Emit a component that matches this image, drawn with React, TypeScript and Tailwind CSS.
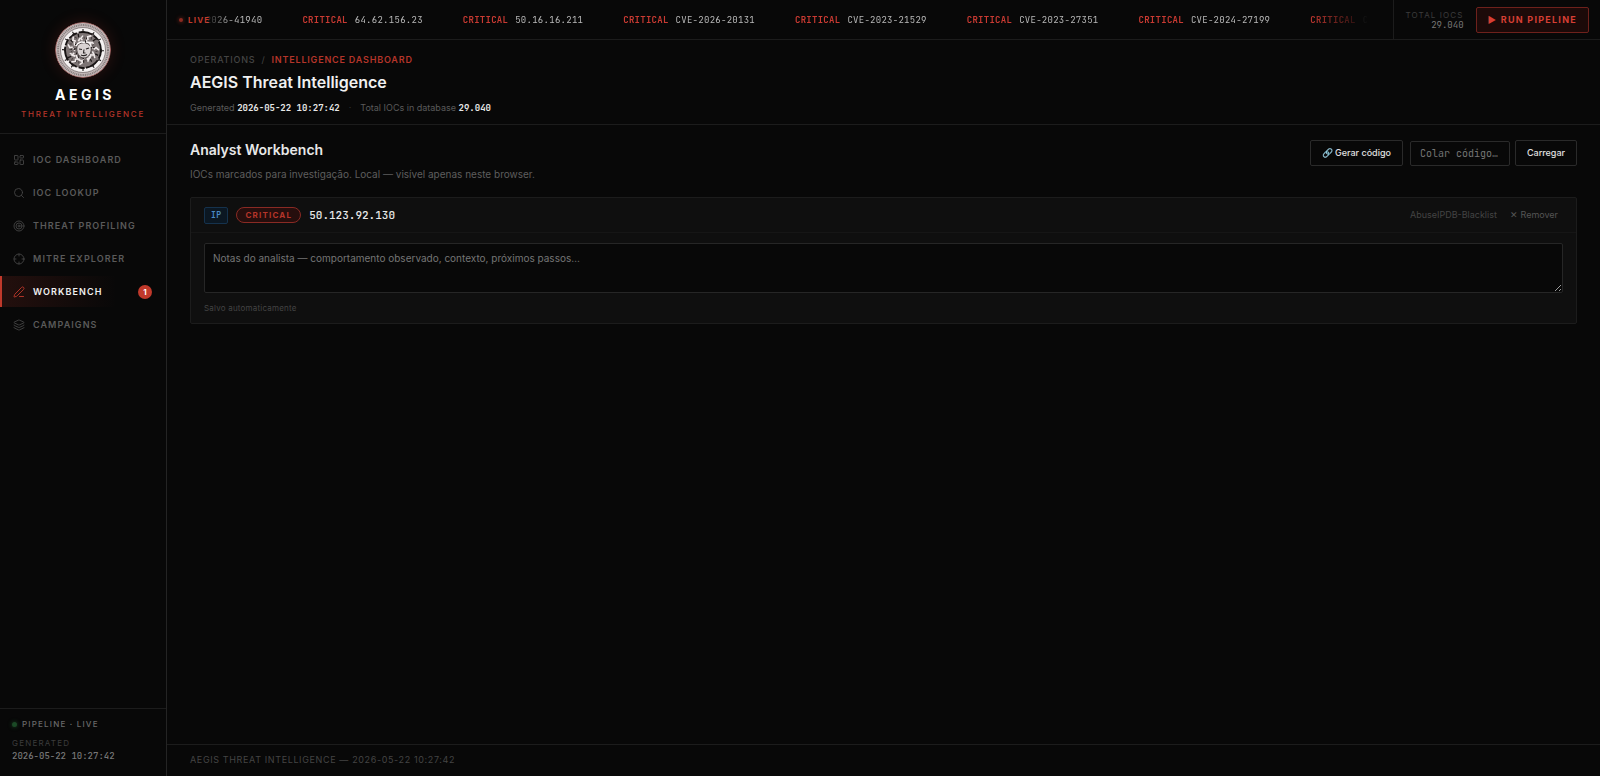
import { useState } from "react";
import { Crosshair, Layers, LayoutDashboard, PenLine, Search, Target } from "lucide-react";
import clsx from "clsx";

const navItems = [
  { id: "dashboard", label: "IOC Dashboard", icon: LayoutDashboard },
  { id: "lookup", label: "IOC Lookup", icon: Search },
  { id: "profiling", label: "Threat Profiling", icon: Target },
  { id: "mitre", label: "MITRE Explorer", icon: Crosshair },
  { id: "workbench", label: "Workbench", icon: PenLine, count: 1 },
  { id: "campaigns", label: "Campaigns", icon: Layers },
];

const tickerItems = [
  "64.62.156.23",
  "50.16.16.211",
  "CVE-2026-20131",
  "CVE-2023-21529",
  "CVE-2023-27351",
  "CVE-2024-27199",
  "CVE-2024-21182",
];

const mono = "font-['JetBrains_Mono','DejaVu_Sans_Mono',monospace]";

function ShieldLogo() {
  const studs = [0, 32, 58, 92, 121, 148, 180, 214, 240, 271, 302, 330];
  const curls = [
    [8, 0.95],
    [38, 1.1],
    [66, 0.85],
    [98, 1.05],
    [132, 0.95],
    [166, 0.85],
    [201, 1],
    [232, 1.1],
    [264, 0.9],
    [298, 1.05],
    [332, 1.1],
  ];
  return (
    <svg viewBox="0 0 56 56" className="size-14 rounded-full shadow-[0_0_16px_rgba(192,57,43,0.2)]" aria-hidden="true">
      <circle cx="28" cy="28" r="27.5" fill="#c3b9b9" stroke="#9a5a58" />
      <circle cx="28" cy="28" r="25" fill="none" stroke="#857b7b" strokeWidth="2" strokeDasharray="1 0.8" />
      <circle cx="28" cy="28" r="22.5" fill="#f5f1f1" stroke="#6a6161" strokeWidth="0.7" />
      <circle cx="28" cy="28" r="18" fill="#7d7474" stroke="#171313" strokeWidth="1.8" strokeDasharray="9 2 14 1.5 6 2" />
      {studs.map((a) => (
        <path key={a} d="M28 7v3M26.5 9.500h3" stroke="#1f1a1a" strokeWidth="1.1" transform={`rotate(${a} 28 28)`} />
      ))}
      {curls.map(([a, k]) => (
        <g key={a} fill="none" transform={`rotate(${a} 28 28) translate(28 28) scale(${k}) translate(-28 -28)`}>
          <path d="M26 18l-2-2 2-3M28 19l3-2" stroke="#efe9e9" strokeWidth="1.5" />
          <path d="M30 16l1-3M24 20l2 1" stroke="#1b1616" strokeWidth="1.2" />
          <path d="M27 14l1 2M26 21l1 1" stroke="#463e3e" strokeWidth="0.9" />
        </g>
      ))}
      <path d="M22 25c1-5 11-6 14 0 1 5-2 11-7 11s-8-6-7-11z" fill="#d9d2d2" stroke="#3b3434" strokeWidth="0.8" />
      <path d="M24 27l3 .5M31 27l3-1M29 27.5l-.5 3.5h2M26 33c2 1 4 .8 6-.5" fill="none" stroke="#2a2525" strokeWidth="1.1" />
      <path d="M21 24c2-4 6-5 9-3M31 20c3 0 5 2 5 5" fill="none" stroke="#faf7f7" strokeWidth="1.4" />
      <path d="M21 33c1 4 3 6 7 6M36 32c0 3-2 5-4 6" fill="none" stroke="#ece6e6" strokeWidth="1.6" />
    </svg>
  );
}

function Sidebar() {
  const [active, setActive] = useState("workbench");

  return (
    <aside className="flex w-[167px] shrink-0 flex-col border-r border-[#242424] bg-[#080808]">
      <div className="flex flex-col items-center border-b border-[#1c1c1c] pt-[22px] pb-3">
        <ShieldLogo />
        <div className="mt-2 pl-1 text-[14px] leading-[18px] font-bold tracking-[0.25em] text-white">AEGIS</div>
        <div className="mt-[3px] text-[8px] leading-[14px] font-medium tracking-[0.22em] text-[#b5352a] uppercase">
          Threat Intelligence
        </div>
      </div>

      <nav className="flex flex-1 flex-col gap-0.5 pt-2.5">
        {navItems.map(({ id, label, icon: Icon, count }) => (
          <button
            key={id}
            type="button"
            onClick={() => setActive(id)}
            className={clsx(
              "flex h-[31px] items-center gap-2 border-l-2 pr-3.5 pl-[11px] text-left text-[9px] font-semibold tracking-[0.12em] uppercase",
              active === id
                ? "border-[#c0392b] bg-linear-to-r from-[#c0392b26] to-[#c0392b00] to-70% text-[#f0f0f0]"
                : "border-transparent text-[#5a5a5a]",
            )}
          >
            <Icon size={12} strokeWidth={1.8} className={active === id ? "text-[#c0392b]" : "text-[#444444]"} />
            {label}
            {count && (
              <span className="ml-auto flex size-3.5 items-center justify-center rounded-full bg-[#c0392b] text-[8px] font-bold tracking-normal text-white">
                {count}
              </span>
            )}
          </button>
        ))}
      </nav>

      <div className="border-t border-[#1c1c1c] px-3 pt-[9px] pb-3.5">
        <div className="flex items-center gap-[5px] text-[8px] leading-[12px] font-medium tracking-[0.15em] text-[#6a6a6a] uppercase">
          <span className="size-[5px] rounded-full bg-[#1b4a26] shadow-[0_0_4px_#1b4a26]" />
          Pipeline · Live
        </div>
        <div className="mt-[7px] text-[8px] leading-[12px] tracking-[0.15em] text-[#3c3c3c] uppercase">Generated</div>
        <div className={clsx(mono, "mt-px text-[9px] leading-[12px] font-medium text-[#777777]")}>2026-05-22 10:27:42</div>
      </div>
    </aside>
  );
}

function TopBar() {
  return (
    <div className="flex h-10 items-stretch border-b border-[#1c1c1c]">
      <div className="flex w-9 shrink-0 items-center gap-[5px] pl-3">
        <span className="size-1 shrink-0 rounded-full bg-[#8a2a20] shadow-[0_0_4px_#8a2a20]" />
        <span className="text-[8px] font-bold tracking-[0.15em] text-[#c0392b]">LIVE</span>
      </div>
      <div className="flex min-w-0 flex-1 items-center overflow-hidden pt-0.5 mask-[linear-gradient(to_right,transparent,black_30px,black_calc(100%-64px),transparent)]">
        <div className={clsx(mono, "-ml-5 flex shrink-0 gap-10 text-[9px] tracking-[0.03em] whitespace-nowrap text-[#b8b8b8]")}>
          <span>CVE-2026-41940</span>
          {tickerItems.map((ioc) => (
            <span key={ioc} className="flex gap-[7px]">
              <span className="font-bold text-[#c93a32]">CRITICAL</span>
              {ioc}
            </span>
          ))}
        </div>
      </div>
      <div className="ml-6 flex shrink-0 items-center gap-3 border-l border-[#1c1c1c] pr-[11px] pl-3">
        <div className="text-right leading-[10px]">
          <div className="text-[8px] tracking-[0.14em] text-[#3c3c3c]">TOTAL IOCS</div>
          <div className={clsx(mono, "text-[9px] text-[#777777]")}>29.040</div>
        </div>
        <button
          type="button"
          className="h-[26px] rounded-xs border border-[#6e211c] bg-[#1c0a09] px-[11px] text-[9px] font-bold tracking-[0.14em] whitespace-nowrap text-[#d63f34]"
        >
          ▶ RUN PIPELINE
        </button>
      </div>
    </div>
  );
}

function PageHeader() {
  return (
    <header className="border-b border-[#1c1c1c] px-[23px] pt-[13px] pb-[9px]">
      <div className="flex gap-1.5 text-[9px] leading-[14px] tracking-[0.09em] text-[#444444] uppercase">
        <span className="font-medium">Operations</span>
        <span>/</span>
        <span className="font-semibold text-[#b5352a]">Intelligence Dashboard</span>
      </div>
      <h1 className="mt-[3px] text-[16px] leading-[24px] font-semibold text-[#f0f0f0]">AEGIS Threat Intelligence</h1>
      <div className="mt-[7px] flex items-center text-[9px] leading-[14px] text-[#5a5a5a]">
        <span>
          Generated <strong className={clsx(mono, "font-bold text-[#e8e8e8]")}>2026-05-22 10:27:42</strong>
        </span>
        <span className="mx-[9px] text-[#333333]">·</span>
        <span>
          Total IOCs in database <strong className={clsx(mono, "font-bold text-[#e8e8e8]")}>29.040</strong>
        </span>
      </div>
    </header>
  );
}

function IocCard() {
  const [notes, setNotes] = useState("");

  return (
    <article className="rounded-xs border border-[#1c1c1c] bg-[#0f0f0f]">
      <div className="flex h-[35px] items-center border-b border-[#161616] px-[13px]">
        <span className={clsx(mono, "flex h-[17px] items-center rounded-xs border border-[#15324d] bg-[#0b1722] px-1.5 text-[8px] font-bold tracking-wider text-[#4a8ac4]")}>
          IP
        </span>
        <span className="ml-2 flex h-4 items-center rounded-full border border-[#8a2a24] bg-[#260e0d] px-2 text-[8px] font-bold tracking-[0.15em] text-[#b5352a]">
          CRITICAL
        </span>
        <span className={clsx(mono, "ml-2 text-[11px] font-medium text-[#e8e8e8]")}>50.123.92.130</span>
        <span className="ml-auto text-[9px] text-[#444444]">AbuseIPDB-Blacklist</span>
        <button type="button" className="ml-2 px-[5px] text-[9px] text-[#555555]">
          ✕ Remover
        </button>
      </div>
      <div className="px-[13px] pt-2.5 pb-2">
        <textarea
          aria-label="Notas do analista"
          value={notes}
          onChange={(e) => setNotes(e.target.value)}
          placeholder="Notas do analista — comportamento observado, contexto, próximos passos…"
          className="block h-[50px] w-full resize-y rounded-xs border border-[#262626] bg-[#080808] px-2 py-1.5 text-[10px] leading-[16px] text-[#e0e0e0] outline-none placeholder:text-[#757575]"
        />
        <div className="mt-2 text-[8px] leading-[14px] tracking-wide text-[#444444]">Salvo automaticamente</div>
      </div>
    </article>
  );
}

function Workbench() {
  return (
    <main className="flex-1 px-[23px] pt-[15px]">
      <div className="mb-4 flex items-start justify-between">
        <div>
          <h2 className="text-[14px] leading-[20px] font-semibold text-[#e8e8e8]">Analyst Workbench</h2>
          <p className="mt-[7px] text-[10px] leading-[14px] text-[#5e5e5e]">
            IOCs marcados para investigação. Local — visível apenas neste browser.
          </p>
        </div>
        <div className="flex items-end text-[9px] font-medium text-[#e0e0e0]">
          <button type="button" className="h-[26px] rounded-xs border border-[#2a2a2a] px-[11px]">
            🔗 Gerar código
          </button>
          <input
            type="text"
            aria-label="Colar código"
            placeholder="Colar código…"
            className={clsx(mono, "ml-[7px] h-[25px] w-[100px] rounded-xs border border-[#2a2a2a] px-[9px] text-[10px] font-normal outline-none placeholder:text-[#757575]")}
          />
          <button type="button" className="ml-[5px] h-[26px] rounded-xs border border-[#2a2a2a] px-[11px]">
            Carregar
          </button>
        </div>
      </div>
      <IocCard />
    </main>
  );
}

export default function App() {
  return (
    <div className="flex min-h-screen bg-[#080808] font-['Inter',sans-serif]">
      <Sidebar />
      <div className="flex min-w-0 flex-1 flex-col">
        <TopBar />
        <PageHeader />
        <Workbench />
        <footer className="border-t border-[#1c1c1c] px-[23px] pt-2 pb-[9px] text-[9px] leading-[14px] tracking-[0.07em] text-[#444444]">
          AEGIS THREAT INTELLIGENCE — 2026-05-22 10:27:42
        </footer>
      </div>
    </div>
  );
}
